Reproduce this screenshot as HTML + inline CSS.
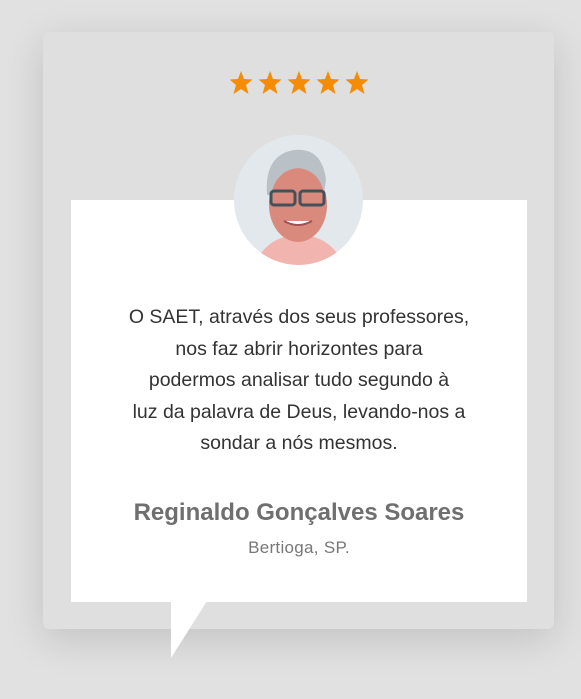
<!DOCTYPE html>
<html><head><style>
html,body{margin:0;padding:0;}
body{width:581px;height:699px;background:#e1e1e1;position:relative;overflow:hidden;font-family:"Liberation Sans",sans-serif;}
.card{position:absolute;left:43px;top:32px;width:511px;height:597px;background:#dfdfdf;border-radius:6px;box-shadow:0 10px 40px rgba(0,0,0,0.14);}
.white{position:absolute;left:71px;top:200px;width:456px;height:402px;background:#fff;}
.avatar{position:absolute;left:234px;top:135px;width:129px;height:130px;border-radius:50%;background:#e3e8ec;overflow:hidden;}
.quote{position:absolute;left:60px;top:302px;width:478px;text-align:center;font-size:19.5px;line-height:31.5px;color:#333;}
.name{position:absolute;left:60px;top:499px;width:478px;text-align:center;font-size:24px;font-weight:bold;color:#6f6f6f;}
.loc{position:absolute;left:71px;top:538px;width:456px;text-align:center;font-size:17px;color:#777;letter-spacing:0.3px;}
</style></head><body>
<div class="card"></div>
<div class="white"></div>
<svg style="position:absolute;left:0;top:0" width="581" height="699"><polygon points="171,601 207,601 171,658" fill="#fff"/></svg>
<svg style="position:absolute;left:230px;top:71px" width="140" height="24" viewBox="0 0 140 24">
<g fill="#f48c06">
<polygon id="s" points="11,0 14,8 22.5,8.5 16,14 18.5,23 11,18 3.5,23 6,14 -0.5,8.5 8,8"/>
<use href="#s" x="29"/><use href="#s" x="58"/><use href="#s" x="87"/><use href="#s" x="116"/>
</g></svg>
<div class="avatar"><svg width="129" height="130" viewBox="0 0 129 130">
<path d="M20 130 Q30 108 50 102 L80 102 Q100 108 110 130Z" fill="#f2b4ae"/>
<ellipse cx="64" cy="70" rx="29" ry="37" fill="#d98a7c"/>
<path d="M33 60 Q30 20 60 15 Q88 12 92 45 L90 58 Q85 35 64 33 Q42 35 37 60Z" fill="#b9c0c6"/>
<rect x="37" y="56" width="24" height="14" rx="3" fill="none" stroke="#45505a" stroke-width="3"/>
<rect x="66" y="56" width="24" height="14" rx="3" fill="none" stroke="#45505a" stroke-width="3"/>
<path d="M50 86 Q64 94 78 86" fill="#fff" stroke="#a05050" stroke-width="2"/>
</svg></div>
<div class="quote">O SAET, através dos seus professores,<br>nos faz abrir horizontes para<br>podermos analisar tudo segundo à<br>luz da palavra de Deus, levando-nos a<br>sondar a nós mesmos.</div>
<div class="name">Reginaldo Gonçalves Soares</div>
<div class="loc">Bertioga, SP.</div>
</body></html>
